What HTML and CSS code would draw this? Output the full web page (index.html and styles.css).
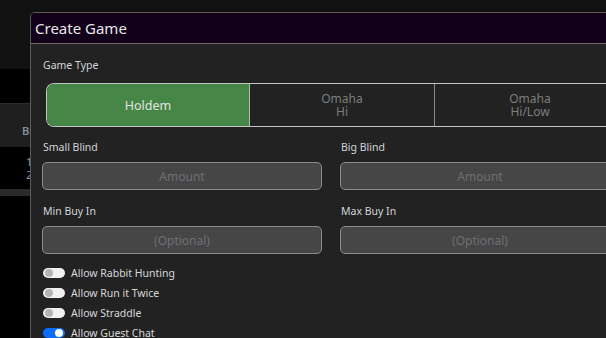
FILE: index.html
```html
<!DOCTYPE html>
<html>
<head>
<meta charset="utf-8">
<link rel="stylesheet" href="styles.css">
</head>
<body>
<div class="page">
  <div class="topbar"></div>
  <div class="gap-row"></div>
  <div class="thead"><span class="th">Blinds</span></div>
  <div class="trow"><span class="td">1/2</span><span class="td">2/5</span></div>
  <div class="tfoot"></div>
  <div class="rest"></div>
</div>

<div class="modal">
  <div class="modal-header">Create Game</div>
  <div class="modal-body">
    <div class="label">Game Type</div>
    <div class="segmented">
      <div class="seg active">Holdem</div>
      <div class="seg">Omaha<br>Hi</div>
      <div class="seg">Omaha<br>Hi/Low</div>
    </div>
    <div class="grid">
      <div class="field">
        <div class="label">Small Blind</div>
        <div class="input">Amount</div>
      </div>
      <div class="field">
        <div class="label">Big Blind</div>
        <div class="input">Amount</div>
      </div>
      <div class="field">
        <div class="label">Min Buy In</div>
        <div class="input">(Optional)</div>
      </div>
      <div class="field">
        <div class="label">Max Buy In</div>
        <div class="input">(Optional)</div>
      </div>
    </div>
    <div class="switches">
      <div class="switch"><span class="toggle"></span>Allow Rabbit Hunting</div>
      <div class="switch"><span class="toggle"></span>Allow Run it Twice</div>
      <div class="switch"><span class="toggle"></span>Allow Straddle</div>
      <div class="switch"><span class="toggle on"></span>Allow Guest Chat</div>
    </div>
  </div>
</div>
</body>
</html>
```
FILE: styles.css
```css
html, body {
  margin: 0;
  padding: 0;
  background: #000;
  width: 606px;
  height: 338px;
  overflow: hidden;
  font-family: "Noto Sans", "Open Sans", sans-serif;
}
.page {
  display: flex;
  flex-direction: column;
}
.topbar {
  height: 69px;
  background: #111111;
}
.gap-row {
  height: 34px;
  background: #000;
}
.thead {
  height: 44px;
  background: #1f1f1f;
  border-top: 1px solid #2e2e2e;
  display: flex;
  align-items: center;
  padding: 10px 0 0 22px;
  box-sizing: border-box;
}
.th {
  color: #8a8f96;
  font-size: 11px;
  font-weight: 600;
}
.trow {
  height: 42px;
  background: #000;
  display: flex;
  flex-direction: column;
  justify-content: center;
  padding: 0 0 0 26px;
  font-size: 11px;
  line-height: 13px;
  color: #8a9aae;
}
.tfoot {
  height: 7px;
  background: #2a2a2a;
}
.rest {
  flex: 1;
}

.modal {
  position: absolute;
  left: 30px;
  top: 12px;
  width: 610px;
  height: 340px;
  background: #222222;
  border: 1px solid #5c5c5c;
  border-radius: 5px 5px 0 0;
  overflow: hidden;
}
.modal-header {
  height: 30px;
  background: #12001a;
  border-bottom: 1px solid #6d6a70;
  color: #e8e8e8;
  font-size: 15px;
  line-height: 30px;
  padding-left: 4px;
}
.modal-body {
  padding: 13px 0 0 11px;
  display: flex;
  flex-direction: column;
}
.label {
  color: #d2d4d8;
  font-size: 10.5px;
  line-height: 16px;
}
.modal-body > .label {
  margin-bottom: 10px;
  padding-left: 1px;
}
.segmented {
  margin-left: 4px;
  height: 42px;
  border: 1px solid #c4c4c4;
  border-right: none;
  border-radius: 8px 0 0 8px;
  display: flex;
  overflow: hidden;
}
.seg {
  width: 184px;
  display: flex;
  align-items: center;
  justify-content: center;
  text-align: center;
  color: #7d7d7d;
  font-size: 12px;
  line-height: 13px;
  border-left: 1px solid #8a8a8a;
}
.seg.active {
  width: 202px;
  border-left: none;
  background: #468646;
  color: #e2e2e2;
  font-size: 12.5px;
  border-right: 1px solid #a6c0a6;
}
.seg.active + .seg {
  border-left: none;
}
.seg:last-child {
  width: 190px;
}
.grid {
  margin-top: 12px;
  display: grid;
  grid-template-columns: 280px 280px;
  column-gap: 18px;
  row-gap: 13px;
}
.field {
  display: flex;
  flex-direction: column;
  gap: 7px;
}
.field .label {
  padding-left: 1px;
}
.input {
  height: 26px;
  background: #464646;
  border: 1px solid #8c8c8c;
  border-radius: 5px;
  color: #6c7076;
  font-size: 12px;
  display: flex;
  align-items: center;
  justify-content: center;
}
.switches {
  margin-top: 9px;
  display: flex;
  flex-direction: column;
}
.switch {
  height: 20px;
  display: flex;
  align-items: center;
  gap: 6px;
  color: #d8d8d8;
  font-size: 10.5px;
  padding-left: 1px;
}
.toggle {
  position: relative;
  width: 22px;
  height: 10px;
  border-radius: 5px;
  background: #f0f0f0;
  flex: none;
}
.toggle::after {
  content: "";
  position: absolute;
  left: 2px;
  top: 1px;
  width: 8px;
  height: 8px;
  border-radius: 50%;
  background: #b4b4b4;
}
.toggle.on {
  background: #0d6efd;
}
.toggle.on::after {
  left: 12px;
  background: #ffffff;
}
```
